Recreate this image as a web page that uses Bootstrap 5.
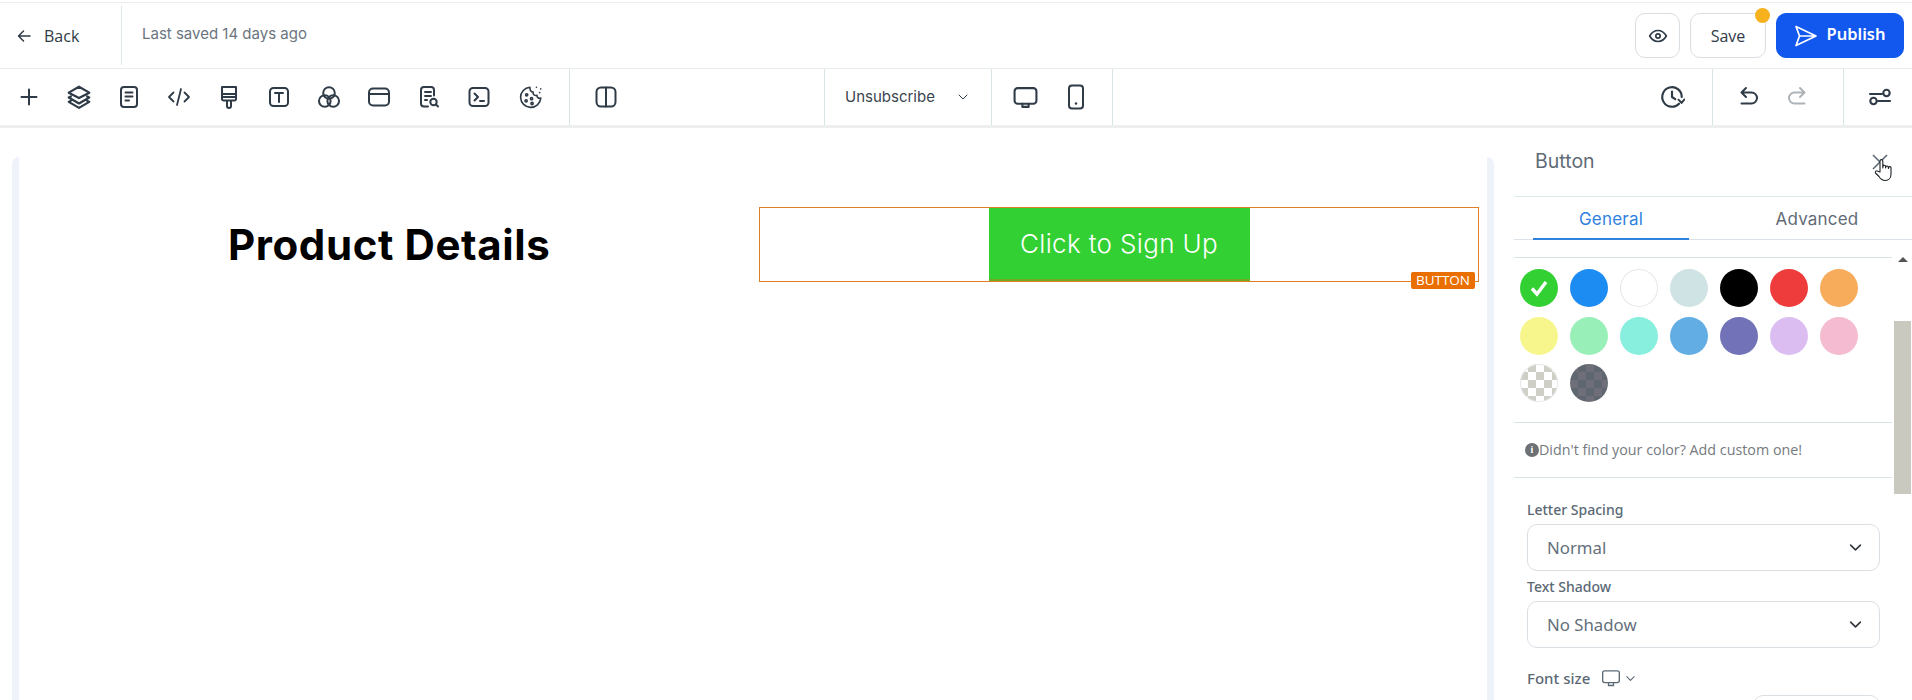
<!DOCTYPE html>
<html lang="en">
<head>
<meta charset="utf-8">
<title>Editor</title>
<link href="https://cdn.jsdelivr.net/npm/bootstrap@5.3.0/dist/css/bootstrap.min.css" rel="stylesheet">
<style>
html,body{height:700px;overflow:hidden;background:#fff}
body{font-family:"Inter","Liberation Sans",sans-serif;color:#2f3b47;padding-top:2px}
svg{display:block}
.ic{fill:none;stroke:#2f3b47;stroke-width:2;stroke-linecap:round;stroke-linejoin:round}
.head-row{height:67px;border-top:1px solid #ececec;border-bottom:1px solid #e8ecec}
.back-box{width:122px;height:59px;padding-left:17px;border-right:1px solid #dde8e8;margin-top:3px;margin-bottom:3px}
.back-txt{font-family:"Open Sans",sans-serif;font-size:16px;color:#2f3b47;margin-left:13px;padding-top:1px}
.saved{font-size:15px;color:#6b7580;margin-left:20px;margin-top:-2px}
.tool-btn{height:45px;border:1px solid #d9dee3;border-radius:10px;background:#fff;padding:0;font-family:"Open Sans",sans-serif;font-size:16px;color:#2f3b47;position:relative}
.b-eye{width:45px;margin-right:10px}
.b-save{width:76px;margin-right:10px}
.b-pub{width:128px;background:#1258ee;border-color:#1258ee;color:#fff;font-weight:600;margin-right:8px;font-family:"Noto Sans",sans-serif;font-size:16.500px}
.b-pub span{padding-bottom:3px}
.dot{position:absolute;width:15px;height:15px;border-radius:50%;background:#f6b11d;top:-6px;right:-5px}
.tool-row{height:56px}
.sec{height:56px;border-right:1px solid #d8e6e8}
.s1{width:570px;padding-left:4px}
.s2{width:255px;padding-left:24px}
.s3{width:167px;padding-left:20px;font-size:15px;color:#3a4550}
.s4{width:121px;padding-left:21px}
.s5{width:600px;padding-right:27px}
.s6{width:131px;padding-left:24px}
.s7{flex:1;border-right:0;padding-left:24px}
.slot{width:50px;display:flex;justify-content:center}
.band{height:3px;background:#eeeeee}
.main-area{height:572px}
.canvas-col{width:1514px;padding:29px 20px 0 12px}
.sheet{height:543px;border-left:7px solid #eef3fa;border-right:7px solid #eef3fa;border-radius:7px 7px 0 0;padding-top:50px}
.pd-col{width:740px;padding-left:209px}
.pd-title{font-family:"Inter",sans-serif;font-weight:700;font-size:42px;line-height:44px;color:#000;margin:16px 0 0;letter-spacing:.6px;white-space:nowrap}
.btn-wrap{width:720px;height:75px;border:1px solid #de8026;position:relative}
.cta{width:261px;height:73px;background:#32d032;color:#fff;font-family:"Inter",sans-serif;font-weight:300;font-size:26px;letter-spacing:.35px;border-bottom:2px solid #72a823}
.tag{position:absolute;right:3px;bottom:-8px;width:64px;height:17px;background:#e86f00;color:#fff;font-family:"Open Sans",sans-serif;font-size:13.500px;line-height:17px;text-align:center;border-radius:2px}
.panel{width:398px;position:relative;height:572px;overflow:hidden}
.p-head{height:69px;padding:0 22px 0 21px;border-bottom:1px solid #dfeaea}
.p-title{font-size:19.500px;color:#5f6b76}
.x-wrap{position:relative;width:20px;height:20px}
.hand{position:absolute;left:4px;top:6px}
.tabbar{height:43px;border-bottom:1px solid #dbe2ea;padding-left:19px}
.tabbar .nav-link{font-size:17px;letter-spacing:.2px;padding:0;height:42px;line-height:44px;text-align:center;color:#5f6b76}
.tabbar .nav-link.on{width:156px;color:#2f82de;border-bottom:2px solid #2f82de;height:43px}
.tabbar .t2{width:160px;margin-left:48px}
.scroll-col{width:378px;margin-top:17px;border-top:1px solid #d8e6e8}
.swatches{display:grid;grid-template-columns:repeat(7,50px);grid-auto-rows:47.5px;padding:11px 0 0 6px;height:164px}
.sw{width:38px;height:38px;border-radius:50%;display:flex;align-items:center;justify-content:center}
.sw-line{box-shadow:inset 0 0 0 1px #e6e6e6}
.chk-l{background:repeating-conic-gradient(#cfcfc8 0 25%,#fff 0 50%) 0 0/16px 16px;box-shadow:inset 0 0 0 1px #e6e6e6}
.chk-d{background:repeating-conic-gradient(#5f6670 0 25%,#6e6f78 0 50%) 0 0/16px 16px}
.hint{height:56px;border-top:1px solid #d8e6e8;border-bottom:1px solid #d8e6e8;font-family:"Open Sans",sans-serif;font-size:14.300px;color:#757a80;padding-left:11px}
.i-dot{width:14px;height:14px;border-radius:50%;background:#6d7075;color:#fff;font:700 10px/14px "Liberation Serif",serif;text-align:center}
.fields{padding:22px 0 0 13px}
.f-lbl{font-family:"Noto Sans",sans-serif;font-size:14px;font-weight:500;color:#5b6975;line-height:20px;margin:0 0 4px}
.form-select.f-sel{width:353px;height:47px;border:1px solid #dadfe4;border-radius:10px;font-family:"Noto Sans",sans-serif;font-size:16.800px;color:#64707b;padding:1px 0 0 19px;margin-bottom:6px;background-position:right 15px center;background-size:17px 13px}
.sb-track{position:absolute;right:0;top:111px;width:18px;height:461px}
.sb-thumb{position:absolute;left:0;right:1px;top:82px;height:173px;background:#c9c9c0}
.sb-up{position:absolute;left:4px;top:18px;width:0;height:0;border-left:5px solid transparent;border-right:5px solid transparent;border-bottom:5px solid #555}
.fs-row{margin-top:20px}
.fs-lbl{font-size:15px}
.fs-stub{position:absolute;left:239px;top:567px;width:127px;height:20px;border:1px solid #dadfe4;border-radius:10px}
</style>
</head>
<body>
<header class="head-row d-flex align-items-center">
  <div class="back-box d-flex align-items-center">
    <svg class="ic" width="14" height="14" viewBox="0 0 14 14" style="stroke-width:1.5"><path d="M13 7H1.5M6.5 2 1.5 7l5 5"/></svg>
    <span class="back-txt">Back</span>
  </div>
  <span class="saved">Last saved 14 days ago</span>
  <div class="ms-auto d-flex align-items-center">
    <button class="tool-btn b-eye d-flex align-items-center justify-content-center" type="button" aria-label="Preview"><svg class="ic" width="20" height="20" viewBox="0 0 24 24"><circle cx="12" cy="12" r="2.6"/><path d="M22 12c-2.6 4.4-6 6.6-10 6.6S4.600 16.400 2 12c2.600-4.400 6-6.600 10-6.600s7.400 2.200 10 6.600z"/></svg></button>
    <button class="tool-btn b-save" type="button">Save<span class="dot"></span></button>
    <button class="tool-btn b-pub d-flex align-items-center justify-content-center gap-2" type="button"><svg width="24" height="24" viewBox="0 0 24 24" fill="none" stroke="#fff" stroke-width="1.7" stroke-linejoin="round" stroke-linecap="round"><path d="M2 2.500 22 12 2 21.500 5.500 12zM5.500 12H22"/></svg><span>Publish</span></button>
  </div>
</header>
<nav class="tool-row d-flex">
  <div class="sec s1 d-flex align-items-center">
    <span class="slot"><svg class="ic" width="24" height="24" viewBox="0 0 24 24"><path d="M12 4.500v15M4.500 12h15"/></svg></span>
    <span class="slot"><svg class="ic" width="26" height="26" viewBox="0 0 24 24"><path d="M12 2.500 21.500 8 12 13 2.500 8zM4.500 11.500 2.500 12.500 12 18l9.500-5.500-2-1M4.500 15.500l-2 1L12 22l9.500-5.500-2-1"/></svg></span>
    <span class="slot"><svg class="ic" width="24" height="24" viewBox="0 0 24 24"><rect x="4" y="2" width="16" height="20" rx="3"/><path d="M8.500 7.500h7M8.500 11.500h7M8.500 15.500h3.500"/></svg></span>
    <span class="slot"><svg class="ic" width="24" height="24" viewBox="0 0 24 24" style="stroke-width:1.800"><path d="M6.500 7.500 2 12l4.500 4.500M17.500 7.500 22 12l-4.500 4.500M14 4l-4 16"/></svg></span>
    <span class="slot"><svg class="ic" width="24" height="24" viewBox="0 0 24 24"><path d="M5 2h14v10H5zM5 9h14M5 12v2a1.500 1.500 0 0 0 1.500 1.500h11A1.500 1.500 0 0 0 19 14v-2M10 15.500V21a2 2 0 0 0 4 0v-5.500"/></svg></span>
    <span class="slot"><svg class="ic" width="24" height="24" viewBox="0 0 24 24"><rect x="3" y="3" width="18" height="18" rx="3.500"/><path d="M8 8h8M12 8v9"/></svg></span>
    <span class="slot"><svg class="ic" width="24" height="24" viewBox="0 0 24 24"><circle cx="12" cy="8" r="5.800"/><circle cx="7.800" cy="16" r="5.800"/><circle cx="16.200" cy="16" r="5.800"/></svg></span>
    <span class="slot"><svg class="ic" width="24" height="24" viewBox="0 0 24 24"><rect x="2" y="3.500" width="20" height="17" rx="4"/><path d="M2 9h20"/></svg></span>
    <span class="slot"><svg class="ic" width="24" height="24" viewBox="0 0 24 24"><path d="M11 21.500H7A3 3 0 0 1 4 18.500V5A3 3 0 0 1 7 2h7a3 3 0 0 1 3 3v5.500M8 7h6M8 11h6M8 15h2"/><circle cx="16.500" cy="17" r="3.200"/><path d="M19 19.500l2 2"/></svg></span>
    <span class="slot"><svg class="ic" width="24" height="24" viewBox="0 0 24 24"><rect x="2.500" y="3" width="19" height="18" rx="3.500"/><path d="M7.500 8.500 11 12l-3.500 3.500M13 16h4"/></svg></span>
    <span class="slot"><svg class="ic" width="26" height="26" viewBox="0 0 24 24" style="stroke-width:1.500;margin-left:3px"><path d="M11 3a9.300 9.300 0 1 0 10 10c-2 .5-3.500-.5-3.500-2.500-2.500.5-4-1-3.500-3-2 0-3.300-2-3-4.500z"/><circle cx="8" cy="10" r="1"/><circle cx="7.500" cy="15.500" r="1"/><circle cx="12.500" cy="13.500" r="1"/><circle cx="13" cy="18" r="1"/><path d="M17 3h.01M21 4.500h.01M20 8h.01"/></svg></span>
  </div>
  <div class="sec s2 d-flex align-items-center">
    <svg class="ic" width="24" height="24" viewBox="0 0 24 24"><rect x="2.500" y="2.500" width="19" height="19" rx="4.500"/><path d="M12 2.500v19"/></svg>
  </div>
  <div class="sec s3 d-flex align-items-center">
    <span>Unsubscribe</span>
    <svg class="ic" width="12" height="12" viewBox="0 0 12 12" style="stroke-width:1;margin-left:22px"><path d="M2 4l4 4 4-4"/></svg>
  </div>
  <div class="sec s4 d-flex align-items-center gap-4">
    <svg class="ic" width="25" height="25" viewBox="0 0 24 24"><rect x="1.500" y="3" width="21" height="15" rx="3"/><path d="M9 18v3h6v-3"/></svg>
    <svg class="ic" width="24" height="26" viewBox="0 0 24 26" style="margin-left:2px"><rect x="5" y="1.500" width="14" height="23" rx="3"/><path d="M12 19.500h.01" stroke-width="2.500"/></svg>
  </div>
  <div class="sec s5 d-flex align-items-center justify-content-end">
    <svg class="ic" width="26" height="26" viewBox="0 0 24 24" style="stroke-width:2"><path d="M21 12a9 9 0 1 0-2.500 6.200M12 7v5l3 2"/><path d="M18 14.500l2.800 3 2.700-3.200" style="stroke-width:1.800"/></svg>
  </div>
  <div class="sec s6 d-flex align-items-center gap-4">
    <svg class="ic" width="24" height="24" viewBox="0 0 24 24"><path d="M9 3 4.500 7.500 9 12M4.500 7.500h10a5.500 5.500 0 0 1 0 11h-10"/></svg>
    <svg class="ic" width="24" height="24" viewBox="0 0 24 24" style="stroke:#aeb3b8"><path d="M15 3l4.500 4.500L15 12M19.500 7.500h-10a5.500 5.500 0 0 0 0 11h10"/></svg>
  </div>
  <div class="sec s7 d-flex align-items-center">
    <svg class="ic" width="24" height="24" viewBox="0 0 24 24" style="stroke-width:2.100"><path d="M2 9h12M10 16h12"/><circle cx="18.500" cy="8" r="3.200"/><circle cx="5.500" cy="16" r="3.200"/></svg>
  </div>
</nav>
<div class="band"></div>
<main class="main-area d-flex">
  <section class="canvas-col">
    <div class="sheet d-flex">
      <div class="pd-col"><h2 class="pd-title">Product Details</h2></div>
      <div class="btn-wrap d-flex justify-content-center">
        <div class="cta d-flex align-items-center justify-content-center">Click to Sign Up</div>
        <span class="tag">BUTTON</span>
      </div>
    </div>
  </section>
  <aside class="panel">
    <div class="p-head d-flex align-items-center justify-content-between">
      <span class="p-title">Button</span>
      <div class="x-wrap">
        <svg width="20" height="20" viewBox="0 0 20 20" fill="none" stroke="#5f6b76" stroke-width="1.600"><path d="M3 3l14 14M17 3 3 17"/></svg>
        <svg class="hand" width="19" height="24" viewBox="0 0 19 24" fill="#fff" stroke="#1c2226" stroke-width="1.100" stroke-linejoin="round"><path d="M6 14V3a1.400 1.400 0 0 1 2.800 0v7l.2-1.500a1.300 1.300 0 0 1 2.600 0v1.500l.2-1a1.300 1.300 0 0 1 2.500 0l.1 1.500.2-.8a1.200 1.200 0 0 1 2.400.3v6c0 4-2.500 6.500-5.500 6.500-3 0-5-1.300-6.500-4L1.500 15c-.9-1.500 1-3 2.300-1.800z"/></svg>
      </div>
    </div>
    <div class="tabbar nav">
      <a class="nav-link on" href="#">General</a>
      <a class="nav-link t2" href="#">Advanced</a>
    </div>
    <div class="scroll-col">
      <div class="swatches">
        <span class="sw" style="background:#32d032"><svg width="22" height="22" viewBox="0 0 22 22" fill="none" stroke="#fff" stroke-width="3.400"><path d="M4 11.500 9 17 18 5"/></svg></span>
        <span class="sw" style="background:#1c8cf2"></span>
        <span class="sw sw-line" style="background:#fff"></span>
        <span class="sw" style="background:#cfe3e4"></span>
        <span class="sw" style="background:#000"></span>
        <span class="sw" style="background:#ee3b3b"></span>
        <span class="sw" style="background:#f7ac5c"></span>
        <span class="sw" style="background:#f7f68c"></span>
        <span class="sw" style="background:#98f0b8"></span>
        <span class="sw" style="background:#88efdf"></span>
        <span class="sw" style="background:#62aee4"></span>
        <span class="sw" style="background:#7272b8"></span>
        <span class="sw" style="background:#dcbdf2"></span>
        <span class="sw" style="background:#f5bbd0"></span>
        <span class="sw chk-l"></span>
        <span class="sw chk-d"></span>
      </div>
      <div class="hint d-flex align-items-center"><span class="i-dot">i</span><span>Didn't find your color? Add custom one!</span></div>
      <div class="fields">
        <p class="f-lbl">Letter Spacing</p>
        <select class="form-select f-sel" aria-label="Letter Spacing"><option>Normal</option></select>
        <p class="f-lbl">Text Shadow</p>
        <select class="form-select f-sel" aria-label="Text Shadow"><option>No Shadow</option></select>
        <div class="fs-row d-flex align-items-center">
          <span class="f-lbl fs-lbl mb-0">Font size</span>
          <svg class="ic" width="20" height="20" viewBox="0 0 24 24" style="stroke:#5b6975;stroke-width:1.600;margin-left:11px"><rect x="2" y="3.500" width="20" height="14" rx="2.500"/><path d="M9 17.500V21h6v-3.500"/></svg>
          <svg class="ic ms-1" width="11" height="11" viewBox="0 0 12 12" style="stroke:#5b6975;stroke-width:1.200"><path d="M2 4l4 4 4-4"/></svg>
        </div>
      </div>
    </div>
    <span class="fs-stub"></span>
    <div class="sb-track"><span class="sb-up"></span><span class="sb-thumb"></span></div>
  </aside>
</main>
<script src="https://cdn.jsdelivr.net/npm/bootstrap@5.3.0/dist/js/bootstrap.bundle.min.js"></script>
</body>
</html>
